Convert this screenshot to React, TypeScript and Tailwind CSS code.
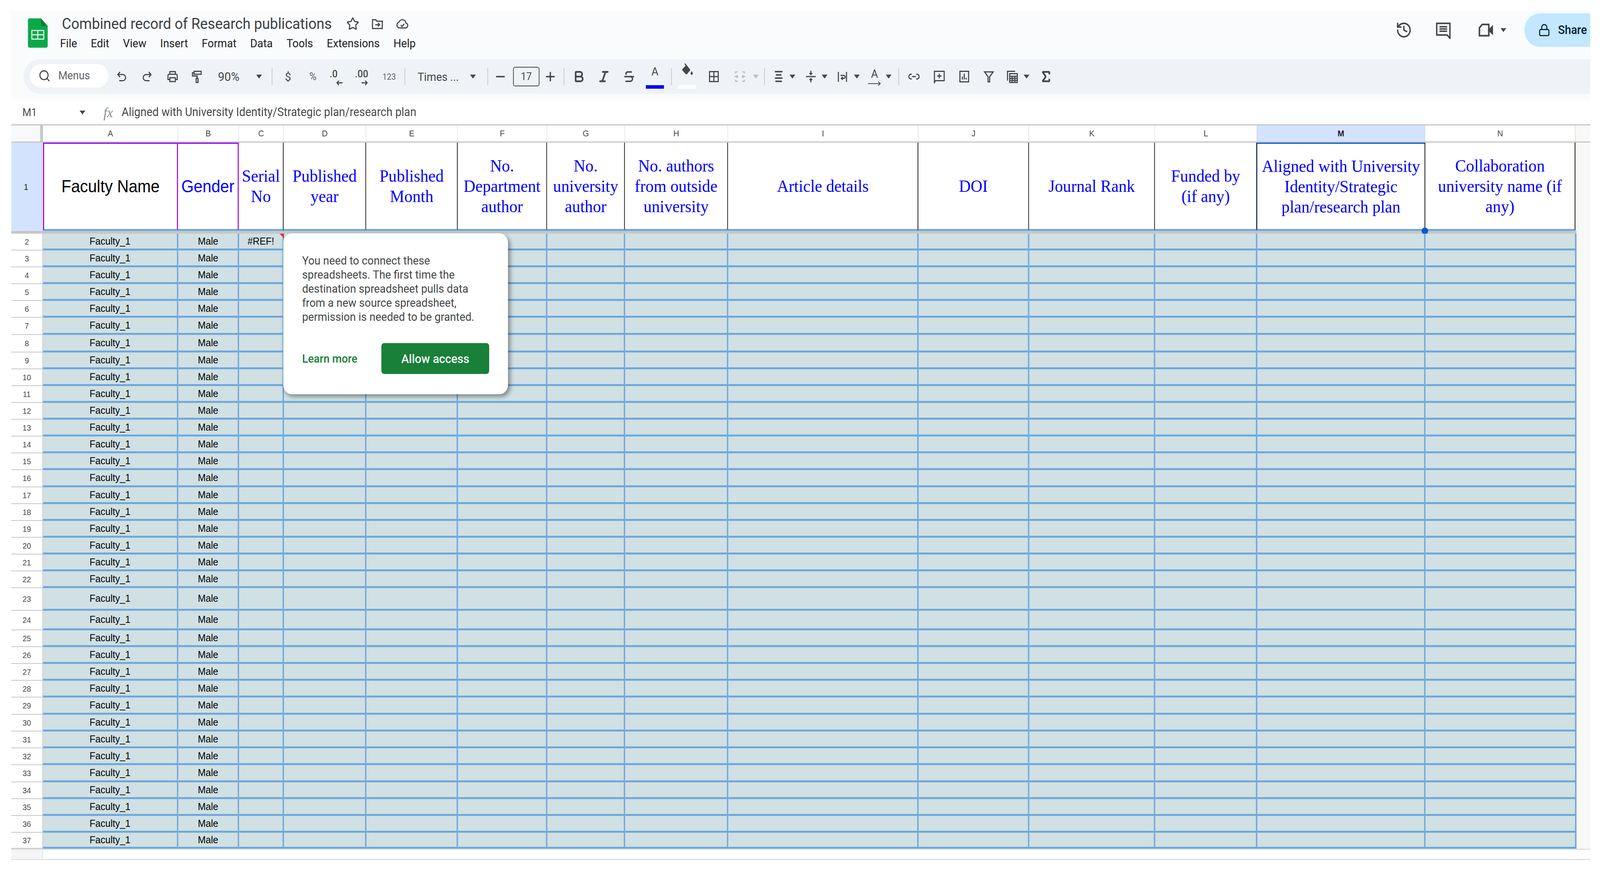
import React from "react";
import { Bold, History, Italic, Lock, Minus, Plus, Search, Sigma, Star, Strikethrough } from "lucide-react";

type GlyphProps = { className?: string; children: React.ReactNode };

const Glyph = ({ className = "", children }: GlyphProps) => (
  <svg viewBox="0 0 24 24" fill="none" stroke="currentColor" strokeWidth={2} className={`w-[36px] h-[36px] shrink-0 text-[#444746] ${className}`}>
    {children}
  </svg>
);

const Caret = ({ className = "" }: { className?: string }) => (
  <svg viewBox="0 0 16 10" className={`w-[16px] h-[10px] shrink-0 fill-[#444746] ${className}`}>
    <path d="M0 0h16l-8 10z" />
  </svg>
);

const Divider = ({ className = "" }: { className?: string }) => (
  <div className={`w-[2px] h-[43px] shrink-0 bg-[#c7c7c7] ${className}`} />
);

const SheetsLogo = () => (
  <svg viewBox="0 0 55 75" className="w-[55px] h-[75px] ml-[46px] mt-[20px] shrink-0">
    <path d="M5 0H36L55 20V70a5 5 0 0 1-5 5H5a5 5 0 0 1-5-5V5a5 5 0 0 1 5-5z" fill="#0ba84a" />
    <path d="M36 0L55 20H41a5 5 0 0 1-5-5z" fill="#00832d" />
    <path d="M11 31h33v22H11zM27.5 31v22M11 42h33" fill="none" stroke="#fff" strokeWidth="2.5" />
  </svg>
);

const columns = [
  { letter: "A", width: "w-[373px]", dataWidth: "w-[374px]" },
  { letter: "B", width: "w-[168px]", dataWidth: "w-[168px]" },
  { letter: "C", width: "w-[124px]", dataWidth: "w-[124px]" },
  { letter: "D", width: "w-[228px]", dataWidth: "w-[228px]" },
  { letter: "E", width: "w-[253px]", dataWidth: "w-[253px]" },
  { letter: "F", width: "w-[247px]", dataWidth: "w-[247px]" },
  { letter: "G", width: "w-[215px]", dataWidth: "w-[215px]" },
  { letter: "H", width: "w-[285px]", dataWidth: "w-[285px]" },
  { letter: "I", width: "w-[526px]", dataWidth: "w-[526px]" },
  { letter: "J", width: "w-[306px]", dataWidth: "w-[306px]" },
  { letter: "K", width: "w-[348px]", dataWidth: "w-[348px]" },
  { letter: "L", width: "w-[282px]", dataWidth: "w-[282px]" },
  { letter: "M", width: "w-[465px]", dataWidth: "w-[465px]" },
  { letter: "N", width: "w-[415px]", dataWidth: "w-[417px]" },
];

const serifBlue = "font-['Liberation_Serif',serif] text-[45px] text-[#0000ff] border-r-2 border-r-black";

const headers = [
  { text: "Faculty Name", style: "font-['Liberation_Sans',sans-serif] text-[44px] text-black border-l-[3px] border-t-[3px] border-r-[3px] border-l-[#9900ff] border-t-[#9900ff] border-r-[#9900ff]" },
  { text: "Gender", style: "font-['Liberation_Sans',sans-serif] text-[44px] text-[#0000ff] border-t-[3px] border-r-[3px] border-t-[#9900ff] border-r-[#9900ff]" },
  { text: "Serial\nNo", style: serifBlue },
  { text: "Published\nyear", style: serifBlue },
  { text: "Published\nMonth", style: serifBlue },
  { text: "No.\nDepartment\nauthor", style: serifBlue },
  { text: "No.\nuniversity\nauthor", style: serifBlue },
  { text: "No. authors\nfrom outside\nuniversity", style: serifBlue },
  { text: "Article details", style: serifBlue },
  { text: "DOI", style: serifBlue },
  { text: "Journal Rank", style: serifBlue },
  { text: "Funded by\n(if any)", style: serifBlue },
  { text: "Aligned with University\nIdentity/Strategic\nplan/research plan", style: `${serifBlue} relative border-l border-l-[#0b57d0] border-t-[3px] border-t-[#0b57d0]` },
  { text: "Collaboration\nuniversity name (if\nany)", style: serifBlue },
];

const rowHeights: Record<number, string> = {
  7: "h-[44px]",
  8: "h-[45px]",
  16: "h-[44px]",
  23: "h-[58px]",
  24: "h-[50px]",
  29: "h-[44px]",
  33: "h-[44px]",
  37: "h-[41px]",
};

const rows = Array.from({ length: 36 }, (_, i) => i + 2);

const menuItems = ["File", "Edit", "View", "Insert", "Format", "Data", "Tools", "Extensions", "Help"];

function Toolbar() {
  return (
    <div className="ml-[34px] h-[88px] rounded-l-[44px] bg-[#eff3f8] flex items-center pl-[18px] text-[#444746] font-['Roboto',sans-serif]">
      {/* Search the menus */}
      <div className="w-[216px] h-[60px] shrink-0 rounded-[30px] bg-white flex items-center pl-[23px] mt-[-4px]">
        <Search className="w-[34px] h-[34px] text-[#444746]" strokeWidth={2} />
        <span className="ml-[21px] text-[29px] text-[#5f6368]">Menus</span>
      </div>

      <Glyph className="ml-[20px]">
        <path d="M8.5 4 4.5 8.5l4 4.5" />
        <path d="M4.5 8.5h9a5 5 0 0 1 0 10.5H7" />
      </Glyph>
      <Glyph className="ml-[33px]">
        <path d="M15.5 4l4 4.5-4 4.5" />
        <path d="M19.5 8.5h-9a5 5 0 0 0 0 10.5H17" />
      </Glyph>
      <Glyph className="ml-[35px]">
        <path d="M7 8V3.5h10V8" />
        <path d="M7 17H3.5v-7a2 2 0 0 1 2-2h13a2 2 0 0 1 2 2v7H17" />
        <path d="M7 14h10v6.5H7z" />
      </Glyph>
      <Glyph className="ml-[31px]">
        <path d="M7 3h13v5H7z" />
        <path d="M7 5.5H4V11h8.5v4" />
        <path d="M10.8 15h3.4v7h-3.4z" />
      </Glyph>
      <span className="ml-[39px] w-[62px] shrink-0 text-[32px] text-center text-[#444746]">90%</span>
      <Caret className="ml-[45px]" />
      <Divider className="ml-[27px]" />

      <span className="ml-[25px] w-[36px] shrink-0 text-center text-[30px]">$</span>
      <span className="ml-[33px] w-[36px] shrink-0 text-center text-[27px] text-[#5f6368]">%</span>
      <div className="ml-[28px] w-[36px] h-[46px] shrink-0 relative">
        <span className="block text-[26px] leading-[32px] font-medium">.0</span>
        <svg viewBox="0 0 16 12" className="w-[18px] h-[14px] absolute right-0 bottom-0" fill="none" stroke="currentColor" strokeWidth={2.5}>
          <path d="M16 6H3M7 1 2 6l5 5" />
        </svg>
      </div>
      <div className="ml-[34px] w-[36px] h-[46px] shrink-0 relative">
        <span className="block text-[26px] leading-[32px] font-medium">.00</span>
        <svg viewBox="0 0 16 12" className="w-[18px] h-[14px] absolute right-0 bottom-0" fill="none" stroke="currentColor" strokeWidth={2.5}>
          <path d="M0 6h13M9 1l5 5-5 5" />
        </svg>
      </div>
      <span className="ml-[40px] w-[36px] shrink-0 text-center text-[22px] text-[#5f6368]">123</span>
      <Divider className="ml-[25px]" />

      <span className="ml-[34px] w-[114px] shrink-0 text-[30px] whitespace-nowrap">Times ...</span>
      <Caret className="ml-[31px]" />
      <Divider className="ml-[32px]" />

      <Minus className="ml-[16px] w-[36px] h-[36px] shrink-0" strokeWidth={2.5} />
      <div className="ml-[17px] w-[73px] h-[50px] shrink-0 rounded-[6px] border-2 border-[#444746] flex items-center justify-center text-[27px]">17</div>
      <Plus className="ml-[12px] w-[36px] h-[36px] shrink-0" strokeWidth={2.5} />
      <Divider className="ml-[19px]" />

      <Bold className="ml-[22px] w-[36px] h-[36px] shrink-0" strokeWidth={3} />
      <Italic className="ml-[33px] w-[36px] h-[36px] shrink-0" strokeWidth={3} />
      <Strikethrough className="ml-[34px] w-[36px] h-[36px] shrink-0" strokeWidth={2.5} />
      <div className="ml-[35px] w-[36px] h-[62px] shrink-0 relative flex justify-center">
        <span className="text-[30px] leading-[36px]">A</span>
        <div className="absolute left-[-7px] bottom-0 w-[50px] h-[9px] bg-[#0000ff]" />
      </div>
      <Divider className="ml-[27px]" />

      <div className="ml-[24px] w-[36px] h-[62px] shrink-0 relative">
        <svg viewBox="0 0 24 24" className="w-[36px] h-[36px] absolute top-[-4px] left-0 fill-[#444746]">
          <path d="M7 1l2 0 9 11-6 7a2 2 0 0 1-2.6 0L3.500 13a2 2 0 0 1 0-2.600L9 5z" />
          <path d="M20.500 14s2 2.600 2 4.200a2 2 0 0 1-4 0c0-1.600 2-4.200 2-4.200z" />
        </svg>
        <div className="absolute left-[-7px] bottom-0 w-[50px] h-[9px] bg-white" />
      </div>
      <Glyph className="ml-[38px]">
        <path d="M4 3.500h16v17H4zM12 3.500v17M4 12h16" />
      </Glyph>
      <Glyph className="ml-[36px] text-[#bdc1c6]">
        <path d="M4 7V4h4M16 4h4v3M4 17v3h4M16 20h4v-3" />
        <path d="M2 12h6M5.500 9.500 8 12l-2.500 2.500M22 12h-6M18.500 9.500 16 12l2.500 2.500" />
      </Glyph>
      <Caret className="ml-[18px] fill-[#bdc1c6]" />
      <Divider className="ml-[15px]" />

      <Glyph className="ml-[20px]">
        <path d="M5 3.500h14M7 9h10M5 14.500h14M6 20h12" strokeWidth={2.5} />
      </Glyph>
      <Caret className="ml-[12px]" />
      <Glyph className="ml-[25px]">
        <path d="M3 12h18" />
        <path d="M12 2v6M9.500 6 12 8.500 14.500 6M12 22v-6M9.500 18l2.500-2.500 2.500 2.500" />
      </Glyph>
      <Caret className="ml-[12px]" />
      <Glyph className="ml-[24px]">
        <path d="M4 4v17M19 4v17" />
        <path d="M8 10h6a2 2 0 0 1 0 5h-4M12 12.500 9.500 15l2.500 2.500" />
      </Glyph>
      <Caret className="ml-[13px]" />
      <div className="ml-[23px] w-[36px] h-[48px] shrink-0 relative flex justify-center">
        <span className="text-[30px] leading-[34px]">A</span>
        <svg viewBox="0 0 36 12" className="w-[36px] h-[12px] absolute bottom-0 left-0" fill="none" stroke="currentColor" strokeWidth={2}>
          <path d="M0 6h34M28 1l6 5-6 5" />
        </svg>
      </div>
      <Caret className="ml-[13px]" />
      <Divider className="ml-[19px]" />

      <Glyph className="ml-[23px]">
        <path d="M8 8H6.500a4 4 0 0 0 0 8H8M16 8h1.500a4 4 0 0 1 0 8H16M8.500 12h7" />
      </Glyph>
      <Glyph className="ml-[34px]">
        <path d="M3 3h18v16H5l-2 3zM12 7v8M8 11h8" />
      </Glyph>
      <Glyph className="ml-[33px]">
        <path d="M4 3h16v18H4z" />
        <path d="M8.500 17v-5M12 17V7M15.500 17v-3" />
      </Glyph>
      <Glyph className="ml-[32px]">
        <path d="M4 4h16l-6.500 8v9h-3v-9z" />
      </Glyph>
      <Glyph className="ml-[29px]">
        <path d="M3 19V3h14" />
        <path d="M7 7h14v15H7zM7 11.500h14M7 15h14M7 18.500h14M11.500 11.500V22M16.500 11.500V22" />
      </Glyph>
      <Caret className="ml-[13px]" />
      <Sigma className="ml-[28px] w-[36px] h-[36px] shrink-0" strokeWidth={3} />
    </div>
  );
}

function TopBar() {
  return (
    <div className="h-[125px] flex items-start">
      <SheetsLogo />
      <div className="ml-[34px] mt-[12px] font-['Roboto',sans-serif]">
        <div className="h-[44px] pl-[5px] flex items-center text-[#3c4043]">
          <span className="w-[746px] text-[39.500px] leading-[44px] whitespace-nowrap">Combined record of Research publications</span>
          <Star className="ml-[40px] w-[36px] h-[36px] text-[#444746]" strokeWidth={2} />
          <Glyph className="ml-[32px]">
            <path d="M3 5h6l2 2.500h10V20H3z" />
            <path d="M8 13.500h8M13 10.500l3 3-3 3" />
          </Glyph>
          <Glyph className="ml-[33px]">
            <path d="M7 19a5 5 0 0 1-1-9.900 6.500 6.500 0 0 1 12.500 1.400A4.300 4.300 0 0 1 18 19z" />
            <path d="M9 14l2.500 2.500L15.500 12" />
          </Glyph>
        </div>
        <div className="mt-[5px] h-[44px] flex items-center gap-[38px] text-[30px] text-[#1f1f1f]">
          {menuItems.map((item) => (
            <span key={item}>{item}</span>
          ))}
        </div>
      </div>

      <div className="ml-auto mt-[7px] flex items-center h-[86px] text-[#444746] font-['Roboto',sans-serif]">
        <History className="w-[46px] h-[46px]" strokeWidth={2} />
        <Glyph className="ml-[63px] w-[46px] h-[46px]">
          <path d="M2.500 3h19v20l-4-4.500h-15z" />
          <path d="M6.500 7.500h11M6.500 10.500h11M6.500 13.500h11" />
        </Glyph>
        <svg viewBox="0 0 24 24" className="ml-[71px] w-[46px] h-[46px] shrink-0 text-[#444746]" fill="none" stroke="currentColor" strokeWidth={2.200}>
          <path d="M7 4.500h9.500v15H3V9z" />
          <path d="M16.500 12l5-4.500v9z" fill="currentColor" />
        </svg>
        <Caret className="ml-[18px] w-[14px] h-[8px]" />
        <div className="ml-[50px] w-[222px] h-[86px] mr-[-40px] rounded-l-[43px] bg-[#c2e7ff] flex items-center pl-[38px] text-[#001d35]">
          <Lock className="w-[34px] h-[38px]" strokeWidth={2} />
          <span className="ml-[21px] text-[31px] font-medium">Share</span>
        </div>
      </div>
    </div>
  );
}

function FormulaBar() {
  return (
    <div className="h-[61px] flex items-center text-[#444746] font-['Roboto',sans-serif]">
      <span className="ml-[31px] w-[127px] text-[28px]">M1</span>
      <Caret className="ml-[31px] w-[14px] h-[9px]" />
      <span className="ml-[50px] w-[50px] font-['Liberation_Serif',serif] italic text-[36px] text-[#80868b]">fx</span>
      <span className="text-[30.700px] whitespace-nowrap">Aligned with University Identity/Strategic plan/research plan</span>
    </div>
  );
}

function AccessPopup() {
  return (
    <div className="absolute left-[752px] top-[279px] w-[621px] rounded-[24px] bg-white p-[52px] shadow-[5px_6px_12px_rgba(0,0,0,0.4)] font-['Roboto',sans-serif]">
      <p className="text-[30px] leading-[36px] text-[#444746] whitespace-pre-line">
        {"You need to connect these\nspreadsheets. The first time the\ndestination spreadsheet pulls data\nfrom a new source spreadsheet,\npermission is needed to be granted."}
      </p>
      <div className="mt-[49px] flex items-center justify-between">
        <span className="text-[30px] font-medium text-[#188038]">Learn more</span>
        <div className="w-[298px] h-[79px] rounded-[8px] bg-[#188038] flex items-center justify-center text-[32px] font-medium text-white">Allow access</div>
      </div>
    </div>
  );
}

// the browser can open narrower than the 4422px the screenshot was taken at, so fit the width to it
const fitX = Math.min(1, window.innerWidth / 4422);

export default function App() {
  return (
    <div className="w-screen h-screen bg-white overflow-hidden">
      <div className="w-[4422px] h-[2229px] origin-top-left" style={{ transform: `scaleX(${fitX})` }}>
        <div className="ml-[31px] w-[4364px] pt-[27px]">
          <div className="h-[230px] bg-[#f9fbfd] overflow-hidden">
            <TopBar />
            <Toolbar />
          </div>
          <FormulaBar />

          <div className="relative bg-[#f8f9f6] font-['Liberation_Sans',sans-serif]">
            {/* Column letters */}
            <div className="flex h-[47px] border-t-[3px] border-b-[3px] border-[#c7c7c7] text-[22px] text-[#444746]">
              <div className="w-[88px] shrink-0 bg-[#f8f9fa] border-r-[8px] border-[#c7c7c7]" />
              {columns.map((col) => (
                <div
                  key={col.letter}
                  className={`${col.width} shrink-0 flex items-center justify-center border-r border-[#c7c7c7] ${col.letter === "M" ? "bg-[#d3e3fd] text-[#1f1f1f] font-bold" : "bg-white"}`}
                >
                  {col.letter}
                </div>
              ))}
            </div>

            {/* Frozen header row */}
            <div className="flex h-[226px]">
              <div className="w-[88px] shrink-0 bg-[#d3e3fd] flex items-center justify-center text-[22px] text-[#1f1f1f] pr-[6px]">1</div>
              {headers.map((header, i) => (
                <div
                  key={header.text}
                  className={`${columns[i].width} shrink-0 bg-white flex items-center justify-center text-center whitespace-pre-line leading-[52px] border-b-[5px] border-b-[#6fa8dc] ${header.style}`}
                >
                  {header.text}
                  {i === 12 && <div className="absolute right-[-10px] bottom-[-14px] w-[18px] h-[18px] rounded-full bg-[#0b57d0]" />}
                </div>
              ))}
            </div>
            <div className="w-[4326px] h-[7px] bg-[#c7c7c7]" />

            {/* Data rows */}
            {rows.map((row) => (
              <div key={row} className={`flex ${rowHeights[row] ?? "h-[43px]"}`}>
                <div className="w-[88px] shrink-0 bg-white border-r-2 border-b-2 border-[#c7c7c7] flex items-center justify-center text-[21px] text-[#444746]">
                  {row}
                </div>
                {columns.map((col, i) => (
                  <div
                    key={col.letter}
                    className={`${col.dataWidth} shrink-0 relative bg-[#d0e0e3] border-r-[4px] border-b-[5px] border-[#6fa8dc] flex items-center justify-center text-[26px] text-black`}
                  >
                    {i === 0 && "Faculty_1"}
                    {i === 1 && "Male"}
                    {i === 2 && row === 2 && "#REF!"}
                    {i === 2 && row === 2 && (
                      <svg viewBox="0 0 12 12" className="absolute top-0 right-[-4px] w-[12px] h-[12px] fill-[#d93025]">
                        <path d="M0 0h12v12z" />
                      </svg>
                    )}
                  </div>
                ))}
              </div>
            ))}

            <AccessPopup />
          </div>

          {/* Empty row under the sheet */}
          <div className="h-[29px] bg-white border-t-[3px] border-b-[3px] border-[#e0e0e0] flex">
            <div className="w-[88px] h-[22px] bg-[#f5f5f5] border-r-2 border-[#e0e0e0]" />
          </div>
        </div>
      </div>
    </div>
  );
}
